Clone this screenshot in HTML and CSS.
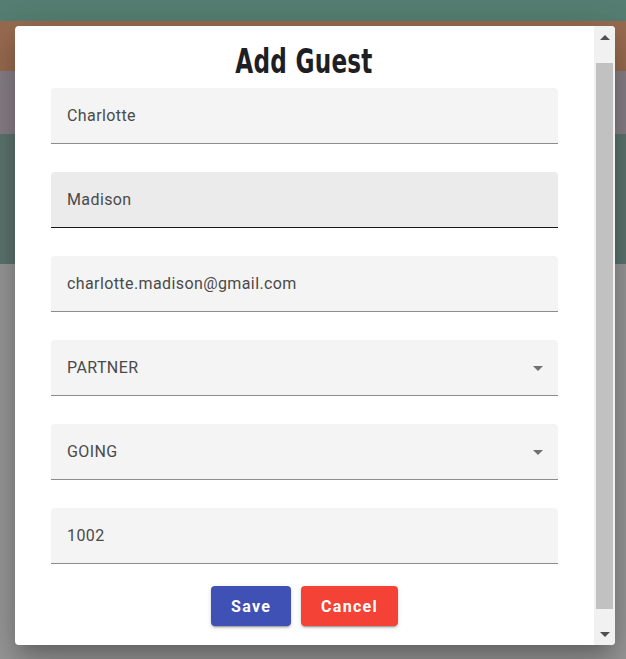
FILE: index.html
```html
<!DOCTYPE html>
<html lang="en">
<head>
<meta charset="utf-8">
<title>Add Guest</title>
<link rel="stylesheet" href="styles.css">
</head>
<body>
<div class="page">
  <div class="band band-teal"></div>
  <div class="band band-orange"></div>
  <div class="band band-lavender"></div>
  <div class="band band-slate"></div>
  <div class="band band-grey"></div>
</div>

<div class="dialog" role="dialog" aria-label="Add Guest">
  <div class="dialog-body">
    <h2 class="dialog-title"><span class="title-text">Add Guest</span></h2>
    <form class="guest-form">
      <div class="field"><input class="field-input" type="text" value="Charlotte"></div>
      <div class="field field-hover"><input class="field-input" type="text" value="Madison"></div>
      <div class="field"><input class="field-input" type="email" value="charlotte.madison@gmail.com"></div>
      <div class="field field-select">
        <span class="field-value">PARTNER</span>
        <svg class="select-icon" viewBox="0 0 24 24" width="24" height="24"><path d="M7 10l5 5 5-5z"/></svg>
      </div>
      <div class="field field-select">
        <span class="field-value">GOING</span>
        <svg class="select-icon" viewBox="0 0 24 24" width="24" height="24"><path d="M7 10l5 5 5-5z"/></svg>
      </div>
      <div class="field"><input class="field-input" type="text" value="1002"></div>
      <div class="actions">
        <button type="button" class="btn btn-save">Save</button>
        <button type="button" class="btn btn-cancel">Cancel</button>
      </div>
    </form>
  </div>
  <div class="scrollbar" aria-hidden="true">
    <div class="sb-button"><span class="sb-arrow sb-up"></span></div>
    <div class="sb-track"><div class="sb-thumb"></div></div>
    <div class="sb-button"><span class="sb-arrow sb-down"></span></div>
  </div>
</div>
</body>
</html>
```
FILE: styles.css
```css
html, body {
  margin: 0;
  padding: 0;
  height: 100%;
  overflow: hidden;
}

body {
  font-family: Roboto, "Liberation Sans", Arial, sans-serif;
}

.page {
  display: flex;
  flex-direction: column;
  height: 100%;
}

.band-teal { height: 21px; background: #557f72; }
.band-orange { height: 50px; background: #9a6c50; }
.band-lavender { height: 63px; background: #8a8189; }
.band-slate { height: 130px; background: #5f7670; }
.band-grey { flex: 1; background: #9a9a9a; }

.dialog {
  position: absolute;
  top: 26px;
  left: 15px;
  width: 600px;
  height: 619px;
  display: flex;
  background: #fff;
  border-radius: 4px;
  overflow: hidden;
  box-shadow: 0 11px 15px -7px rgba(0,0,0,0.2), 0 24px 38px 3px rgba(0,0,0,0.14), 0 9px 46px 8px rgba(0,0,0,0.12);
}

.dialog-body {
  flex: 1;
  padding: 16px 36px 0;
  display: flex;
  flex-direction: column;
}

.dialog-title {
  margin: 0 0 6px;
  height: 40px;
  line-height: 40px;
  text-align: center;
  font-family: "DejaVu Sans Condensed", "DejaVu Sans", sans-serif;
  font-stretch: condensed;
  font-weight: 700;
  font-size: 33px;
  color: #1e1e24;
}

.title-text {
  display: inline-block;
  transform: scaleX(0.78);
  letter-spacing: 0.3px;
}

.guest-form {
  display: flex;
  flex-direction: column;
  gap: 28px;
  margin: 0;
}

.field {
  height: 55px;
  display: flex;
  align-items: center;
  background: #f4f4f4;
  border-radius: 4px 4px 0 0;
  border-bottom: 1px solid #8c8c8c;
  position: relative;
}

.field-hover {
  background: #ebebeb;
  border-bottom-color: #1a1a1a;
}

.field-input {
  flex: 1;
  height: 100%;
  border: 0;
  outline: 0;
  background: transparent;
  padding: 0 16px 1px;
  font-family: Roboto, "Liberation Sans", sans-serif;
  font-size: 16px;
  letter-spacing: 0.4px;
  color: #4a4a4a;
}

.field-value {
  flex: 1;
  padding: 0 16px 1px;
  font-size: 16px;
  letter-spacing: 0.4px;
  color: #4a4a4a;
}

.select-icon {
  margin-right: 8px;
  fill: rgba(0,0,0,0.54);
}

.actions {
  display: flex;
  justify-content: center;
  gap: 10px;
  margin-top: -6px;
}

.btn {
  height: 40px;
  padding: 0 20px;
  border: 0;
  border-radius: 4px;
  font-family: Roboto, "Liberation Sans", sans-serif;
  font-weight: 700;
  font-size: 16px;
  letter-spacing: 1.3px;
  color: #fff;
  box-shadow: 0 3px 1px -2px rgba(0,0,0,0.2), 0 2px 2px 0 rgba(0,0,0,0.14), 0 1px 5px 0 rgba(0,0,0,0.12);
}

.btn-save { background: #3f51b5; width: 80px; }
.btn-cancel { background: #f44336; width: 97px; }

.scrollbar {
  width: 21px;
  background: #f1f1f1;
  display: flex;
  flex-direction: column;
}

.sb-button {
  height: 22px;
  display: flex;
  align-items: center;
  justify-content: center;
}

.sb-arrow {
  width: 0;
  height: 0;
  border-left: 5px solid transparent;
  border-right: 5px solid transparent;
}

.sb-up { border-bottom: 5px solid #505050; }
.sb-down { border-top: 5px solid #505050; }

.sb-track {
  flex: 1;
  padding: 15px 2px 14px;
  display: flex;
}

.sb-thumb {
  flex: 1;
  background: #c1c1c1;
}
```
